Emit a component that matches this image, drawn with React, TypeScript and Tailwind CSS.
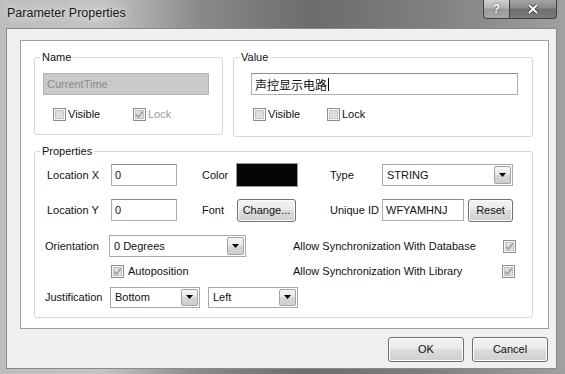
import React from "react";

const ui = "font-['Liberation_Sans','Noto_Sans_CJK_SC',sans-serif] text-[11px] leading-[13px] text-[#111]";

function Box({ checked, x }: { checked?: boolean; x?: string }) {
  return (
    <svg width="13" height="13" viewBox="0 0 13 13" className={"shrink-0 " + (x ?? "")}>
      <rect x="0.5" y="0.5" width="12" height="12" fill="#f6f6f6" stroke="#8f8f8f" />
      <rect x="2.5" y="2.5" width="8" height="8" fill="#dedede" stroke="#c6c6c6" />
      {checked && (
        <path d="M3.3 6.6 L5.4 9.2 L9.8 3.4" stroke="#a2a2a2" strokeWidth="1.7" fill="none" />
      )}
    </svg>
  );
}

function Check({ label, checked, off, w }: { label: string; checked?: boolean; off?: boolean; w: string }) {
  return (
    <div className={"flex items-center gap-[2px] " + w}>
      <Box checked={checked} />
      <span className={off ? "text-[#9a9a9a]" : ""}>{label}</span>
    </div>
  );
}

function Field({ value, w, h = "h-[22px]" }: { value: string; w: string; h?: string }) {
  return (
    <div className={"flex items-center border border-[#abadb3] border-t-[#8e8e8e] bg-white pl-[3px] " + w + " " + h}>
      {value}
    </div>
  );
}

function Combo({ value, w, h = "h-[22px]" }: { value: string; w: string; h?: string }) {
  return (
    <div className={"flex items-stretch border border-[#a9a9a9] bg-white p-[1px] " + w + " " + h}>
      <div className="flex flex-1 items-center pl-[3px]">{value}</div>
      <div className="flex w-[17px] items-center justify-center rounded-[2px] border border-[#a3a3a3] bg-[linear-gradient(#f6f6f6,#e6e6e6_50%,#d6d6d6_50%,#cfcfcf)]">
        <svg width="7" height="4" viewBox="0 0 7 4">
          <path d="M0 0 H7 L3.5 4 Z" fill="#000" />
        </svg>
      </div>
    </div>
  );
}

function Btn({ children, w, h }: { children: React.ReactNode; w: string; h: string }) {
  return (
    <div
      className={
        "flex items-center justify-center rounded-[3px] border border-[#707070] bg-[linear-gradient(#f2f2f2,#ebebeb_45%,#dddddd_50%,#cfcfcf)] shadow-[inset_0_0_0_1px_#fcfcfc] " +
        w +
        " " +
        h
      }
    >
      {children}
    </div>
  );
}

function Group({ title, className, children }: { title: string; className: string; children: React.ReactNode }) {
  return (
    <fieldset className={"m-0 rounded-[3px] border border-[#d8d8d8] p-0 " + className}>
      <legend className="ml-[5px] px-[2px] leading-[13px]">{title}</legend>
      {children}
    </fieldset>
  );
}

export default function App() {
  return (
    <div
      className={
        "flex h-[374px] w-[565px] flex-col overflow-hidden bg-[linear-gradient(90deg,#bdbdbd_0%,#c4c4c4_18%,#8a8a8a_35%,#6c6c6c_55%,#7e7e7e_75%,#a0a0a0_100%)] " +
        ui
      }
    >
      {/* title bar */}
      <div className="flex h-[28px] shrink-0 items-start">
        <div className="mt-[5px] pl-[7px] font-['Liberation_Sans',sans-serif] text-[12.5px] leading-[16px] text-[#1a1a1a] [text-shadow:0_0_6px_#e8e8e8,0_0_10px_#dcdcdc]">
          Parameter Properties
        </div>
        <div className="ml-auto mr-[8px] flex h-[19px]">
          <div className="flex w-[27px] items-center justify-center rounded-bl-[4px] border border-t-0 border-[#3f3f3f] bg-[linear-gradient(#cfcfcf,#b4b4b4_45%,#9a9a9a_50%,#a8a8a8)] text-[12px] font-bold text-white [text-shadow:0_0_2px_#333]">
            ?
          </div>
          <div className="flex w-[47px] items-center justify-center rounded-br-[4px] border border-l-0 border-t-0 border-[#3f3f3f] bg-[linear-gradient(#a4a4a4,#8a8a8a_45%,#6e6e6e_50%,#7c7c7c)]">
            <svg width="12" height="10" viewBox="0 0 12 10">
              <path d="M2 1 L10 9 M10 1 L2 9" stroke="#3a3a3a" strokeWidth="3.6" />
              <path d="M2 1 L10 9 M10 1 L2 9" stroke="#ffffff" strokeWidth="2" />
            </svg>
          </div>
        </div>
      </div>

      {/* client area */}
      <div className="ml-[6px] h-[341px] w-[551px] border border-[#8a8a8a] bg-[#f0f0f0] pl-[13px] pt-[11px]">
        <div className="h-[289px] w-[529px] border border-[#a0a0a0] bg-white pl-[13px] pt-[10px]">
          <div className="flex gap-[10px]">
            <Group title="Name" className="h-[84px] w-[189px]">
              <div className="ml-[8px] mt-[9px] flex h-[22px] w-[166px] items-center border border-[#b4b4b4] bg-[#c9c9c9] pl-[3px] text-[#8a8a8a]">
                CurrentTime
              </div>
              <div className="ml-[18px] mt-[13px] flex">
                <Check label="Visible" w="w-[80px]" />
                <Check label="Lock" checked off w="w-[60px]" />
              </div>
            </Group>
            <Group title="Value" className="h-[86px] w-[300px]">
              <div className="ml-[17px] mt-[9px] flex h-[22px] w-[267px] items-center border border-[#abadb3] border-t-[#8e8e8e] bg-white pl-[3px] font-['Noto_Sans_CJK_SC',sans-serif] text-[12px]">
                声控显示电路<span className="ml-[1px] h-[13px] w-[1px] bg-black" />
              </div>
              <div className="ml-[19px] mt-[13px] flex">
                <Check label="Visible" w="w-[74px]" />
                <Check label="Lock" w="w-[60px]" />
              </div>
            </Group>
          </div>

          <Group title="Properties" className="mt-[8px] h-[173px] w-[499px]">
            {/* row 1 */}
            <div className="mt-[5px] flex h-[24px] items-center pl-[12px]">
              <span className="w-[64px]">Location X</span>
              <Field value="0" w="w-[66px]" />
              <span className="ml-[25px] w-[34px]">Color</span>
              <div className="h-[24px] w-[62px] border border-[#9a9a9a] bg-[#050505]" />
              <span className="ml-[32px] w-[52px]">Type</span>
              <Combo value="STRING" w="w-[131px]" />
            </div>
            {/* row 2 */}
            <div className="mt-[12px] flex h-[22px] items-center pl-[12px]">
              <span className="w-[64px]">Location Y</span>
              <Field value="0" w="w-[66px]" />
              <span className="ml-[25px] w-[35px]">Font</span>
              <Btn w="w-[59px]" h="h-[23px]">Change...</Btn>
              <span className="ml-[34px] w-[52px]">Unique ID</span>
              <Field value="WFYAMHNJ" w="w-[82px]" />
              <div className="ml-[4px]">
                <Btn w="w-[45px]" h="h-[23px]">Reset</Btn>
              </div>
            </div>
            {/* row 3 */}
            <div className="mt-[14px] flex h-[22px] items-center pl-[10px]">
              <span className="w-[64px]">Orientation</span>
              <Combo value="0 Degrees" w="w-[137px]" />
              <span className="ml-[47px] w-[210px]">Allow Synchronization With Database</span>
              <Box checked />
            </div>
            {/* row 4 */}
            <div className="mt-[7px] flex h-[14px] items-center pl-[76px]">
              <div className="flex w-[182px] items-center gap-[4px]">
                <Box checked />
                <span>Autoposition</span>
              </div>
              <span className="w-[209px]">Allow Synchronization With Library</span>
              <Box checked />
            </div>
            {/* row 5 */}
            <div className="mt-[9px] flex h-[20px] items-center pl-[10px]">
              <span className="w-[65px]">Justification</span>
              <Combo value="Bottom" w="w-[90px]" h="h-[21px]" />
              <div className="ml-[8px]">
                <Combo value="Left" w="w-[90px]" h="h-[21px]" />
              </div>
            </div>
          </Group>
        </div>

        <div className="mt-[8px] flex w-[528px] justify-end gap-[8px]">
          <Btn w="w-[76px]" h="h-[25px]">OK</Btn>
          <Btn w="w-[76px]" h="h-[25px]">Cancel</Btn>
        </div>
      </div>
    </div>
  );
}
